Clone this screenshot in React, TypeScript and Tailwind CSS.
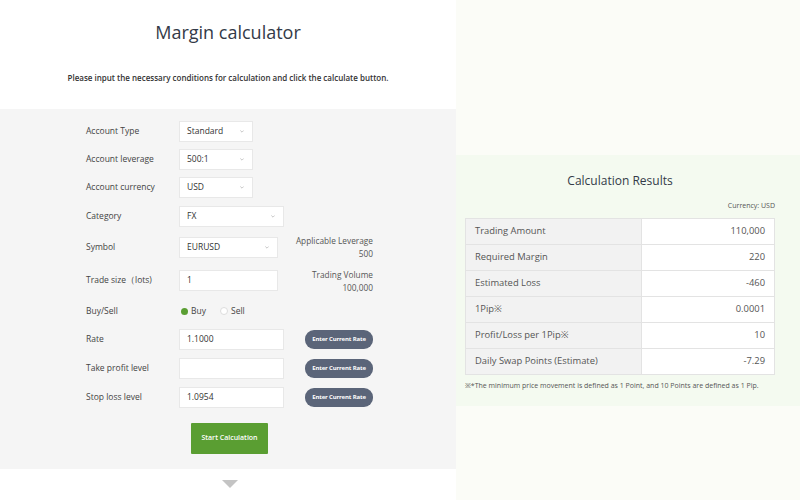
import React from "react";

const font = { fontFamily: '"Open Sans", "Noto Sans", sans-serif' };

function Chevron() {
  return (
    <svg viewBox="0 0 6 4" className="h-[3px] w-[4px]" fill="none" stroke="#aaa" strokeWidth="1">
      <path d="M0.5 0.5 L3 3 L5.5 0.5" />
    </svg>
  );
}

function Select({ value, width }: { value: string; width: string }) {
  return (
    <div
      className={`${width} flex h-[21px] items-center justify-between border border-[#e8e8e8] bg-white pl-[7px] pr-[8px] text-[8.5px] text-[#333]`}
    >
      <span>{value}</span>
      <Chevron />
    </div>
  );
}

function Input({ value, width }: { value: string; width: string }) {
  return (
    <div className={`${width} flex h-[21px] items-center border border-[#e8e8e8] bg-white pl-[7px] text-[8.5px] text-[#333]`}>
      {value}
    </div>
  );
}

function RateButton() {
  return (
    <button className="ml-auto flex h-[19px] w-[68px] items-center justify-center rounded-[9px] bg-[#5b6579] text-[6px] font-bold tracking-tight text-white">
      Enter Current Rate
    </button>
  );
}

function Row({ label, height, children }: { label: string; height: string; children: React.ReactNode }) {
  return (
    <div className={`flex ${height} items-center`}>
      <div className="w-[93px] shrink-0 text-[8.5px] text-[#444]">{label}</div>
      {children}
    </div>
  );
}

const results = [
  ["Trading Amount", "110,000"],
  ["Required Margin", "220"],
  ["Estimated Loss", "-460"],
  ["1Pip※", "0.0001"],
  ["Profit/Loss per 1Pip※", "10"],
  ["Daily Swap Points (Estimate)", "-7.29"],
];

export default function App() {
  return (
    <div className="flex h-[500px] w-[800px] overflow-hidden" style={font}>
      {/* Left: calculator form */}
      <div className="flex w-[456px] shrink-0 flex-col">
        <div className="flex h-[109px] flex-col items-center bg-white">
          <h1 className="mt-[19px] text-[18px] text-[#333a48]">Margin calculator</h1>
          <p className="mt-[26px] text-[8px] font-semibold text-[#333]">
            Please input the necessary conditions for calculation and click the calculate button.
          </p>
        </div>

        <div className="h-[360px] bg-[#f5f5f5] pt-[8px]">
          <div className="w-[373px] pl-[86px]">
            <Row label="Account Type" height="h-[28px]">
              <Select value="Standard" width="w-[74px]" />
            </Row>
            <Row label="Account leverage" height="h-[28px]">
              <Select value="500:1" width="w-[74px]" />
            </Row>
            <Row label="Account currency" height="h-[29px]">
              <Select value="USD" width="w-[74px]" />
            </Row>
            <Row label="Category" height="h-[28px]">
              <Select value="FX" width="w-[105px]" />
            </Row>
            <Row label="Symbol" height="h-[34px]">
              <Select value="EURUSD" width="w-[99px]" />
              <div className="ml-auto text-right text-[8.3px] leading-[13px] text-[#555]">
                <div>Applicable Leverage</div>
                <div>500</div>
              </div>
            </Row>
            <Row label="Trade size（lots)" height="h-[33px]">
              <Input value="1" width="w-[99px]" />
              <div className="ml-auto text-right text-[8.3px] leading-[13px] text-[#555]">
                <div>Trading Volume</div>
                <div>100,000</div>
              </div>
            </Row>
            <Row label="Buy/Sell" height="h-[28px]">
              <div className="flex items-center text-[8.5px] text-[#444]">
                <span className="ml-[2px] h-[7px] w-[7px] rounded-full bg-[#5a9e32]" />
                <span className="ml-[3px]">Buy</span>
                <span className="ml-[14px] h-[8px] w-[8px] rounded-full border border-[#ddd] bg-white" />
                <span className="ml-[3px]">Sell</span>
              </div>
            </Row>
            <Row label="Rate" height="h-[29px]">
              <Input value="1.1000" width="w-[105px]" />
              <RateButton />
            </Row>
            <Row label="Take profit level" height="h-[29px]">
              <Input value="" width="w-[105px]" />
              <RateButton />
            </Row>
            <Row label="Stop loss level" height="h-[29px]">
              <Input value="1.0954" width="w-[105px]" />
              <RateButton />
            </Row>
          </div>
          <div className="mt-[11px] pl-[191px]">
            <button className="flex h-[31px] w-[77px] items-center justify-center rounded-[1px] bg-[#5a9e32] text-[7px] font-semibold text-white">
              Start Calculation
            </button>
          </div>
        </div>

        <div className="flex flex-1 justify-start bg-white pl-[222px] pt-[11px]">
          <div className="h-0 w-0 border-x-[8px] border-t-[8px] border-x-transparent border-t-[#c4c4c4]" />
        </div>
      </div>

      {/* Right: results */}
      <div className="flex flex-1 flex-col bg-[#fbfcf7]">
        <div className="h-[155px]" />
        <div className="h-[251px] bg-[#f4faf0] pl-[9px] pr-[25px]">
          <h2 className="mt-[17px] text-center text-[12px] text-[#333a48]">Calculation Results</h2>
          <div className="mt-[11px] text-right text-[7px] text-[#555]">Currency: USD</div>
          <table className="mt-[6px] w-[310px] border-collapse text-[9.4px] text-[#555]">
            <tbody>
              {results.map(([k, v]) => (
                <tr key={k} className="h-[26px]">
                  <td className="w-[176px] border border-[#e3e3e3] bg-[#f2f2f2] pl-[9px]">{k}</td>
                  <td className="border border-[#e3e3e3] bg-white pr-[9px] text-right">{v}</td>
                </tr>
              ))}
            </tbody>
          </table>
          <p className="mt-[6px] text-[7px] text-[#555]">
            ※*The minimum price movement is defined as 1 Point, and 10 Points are defined as 1 Pip.
          </p>
        </div>
        <div className="flex-1" />
      </div>
    </div>
  );
}
